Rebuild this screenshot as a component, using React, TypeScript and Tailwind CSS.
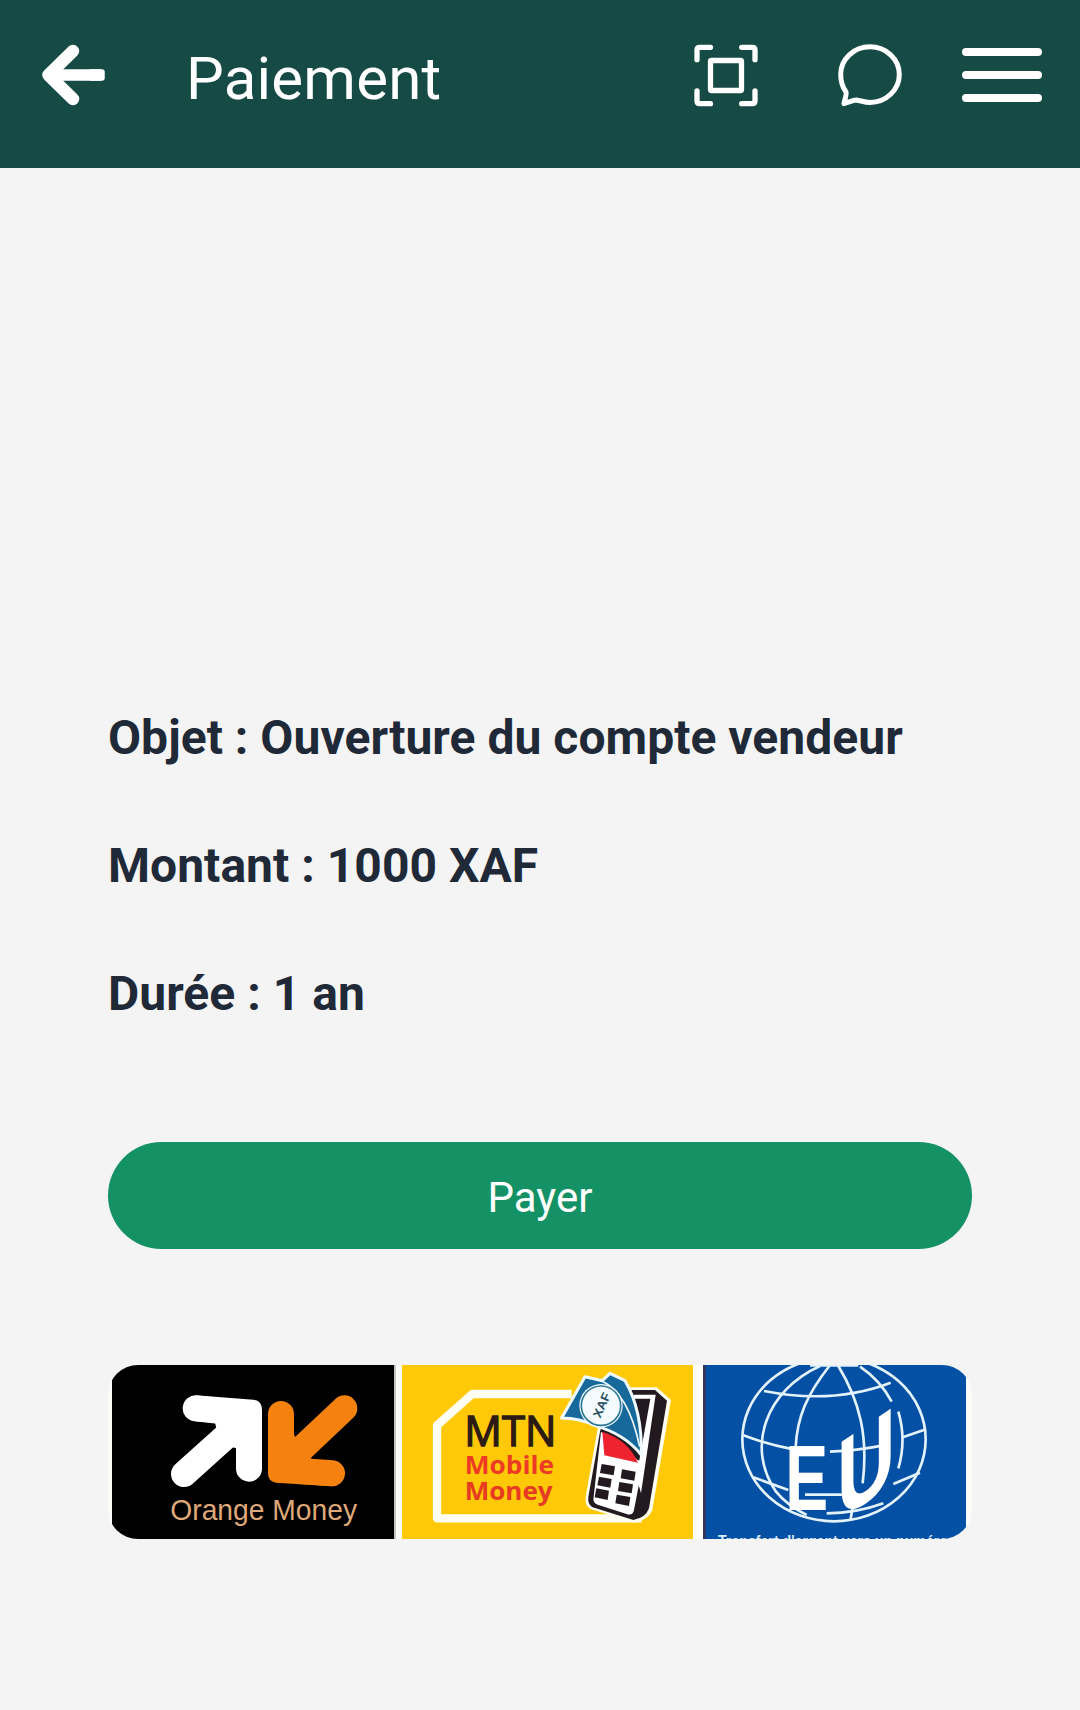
import React from "react";

function BackArrow() {
  return (
    <svg className="h-[64px] w-[66px]" viewBox="40 43.500 66 64" fill="none" stroke="white" strokeLinejoin="round">
      <path d="M73 51.500 48.500 75.500 73 99.500" strokeWidth="12.500" strokeLinecap="round" />
      <path d="M50 75.500H101" strokeWidth="11.500" />
      <rect x="90" y="71.500" width="13" height="8" rx="1" fill="white" strokeWidth="3.500" />
    </svg>
  );
}

function ScanIcon() {
  return (
    <svg className="h-[64px] w-[66px]" viewBox="693 43 66 64" fill="none" stroke="white" strokeWidth="5.300" strokeLinecap="round" strokeLinejoin="round">
      <path d="M697 59.700V50q0-2.700 2.700-2.700H710.500M741.700 47.300H752.300q2.700 0 2.700 2.700V59.700M755 91V101q0 2.700-2.700 2.700H741.700M710.500 103.700H699.700q-2.700 0-2.700-2.700V91" />
      <rect x="710.500" y="60.500" width="31" height="30" rx="1" />
    </svg>
  );
}

function ChatIcon() {
  return (
    <svg className="h-[64px] w-[66px]" viewBox="837 43 66 64" fill="none" stroke="white" strokeWidth="5" strokeLinecap="round" strokeLinejoin="round">
      <path d="M846 92C842.500 87 840.700 81 840.700 74.500 840.700 59 854 46.800 870 46.800S899.300 59 899.300 74.500 886 102.500 870 102.500C865 102.500 861 100.800 856.500 100 852.500 100.300 848.500 102.500 844 103.600 844.600 99.500 846.800 95 846 92Z" />
    </svg>
  );
}

function OrangeMoney() {
  return (
    <svg className="h-[174px] w-[282px] shrink-0 bg-black" viewBox="36 45 846 522">
      <path d="M287 175 390 186M447 235 447 356M430 212 252 372" fill="none" stroke="#fff" strokeWidth="78" strokeLinecap="round" />
      <path d="M287 136 460 149Q486 152 486 180V355H408V295L360 280 345 218 287 214Z" fill="#fff" />
      <path d="M543 192V345M600 363 696 370M553 345 733 175" fill="none" stroke="#f5820f" strokeWidth="78" strokeLinecap="round" />
      <path d="M504 190H582V253L600 300 640 331 696 332 696 409 528 398Q504 395 504 370Z" fill="#f5820f" />
      <text x="211" y="509" textLength="560" lengthAdjust="spacingAndGlyphs" fontFamily="Liberation Sans" fontSize="88" fill="#dfa878">Orange Money</text>
    </svg>
  );
}

function MtnMoney() {
  return (
    <svg className="h-[174px] w-[291px] shrink-0 bg-[#ffc907]" viewBox="21 45 873 522">
      <path d="M530 132H232L126 226V505H740" fill="none" stroke="#fffef2" strokeWidth="25" strokeLinejoin="round" />
      <text x="208" y="288" textLength="276" lengthAdjust="spacingAndGlyphs" fontFamily="Open Sans" fontSize="124" fill="#2c1a14" stroke="#2c1a14" strokeWidth="4">MTN</text>
      <text x="209" y="373" textLength="268" lengthAdjust="spacingAndGlyphs" fontFamily="Open Sans" fontWeight="700" fontSize="74" fill="#ee3a24">Mobile</text>
      <text x="209" y="451" textLength="264" lengthAdjust="spacingAndGlyphs" fontFamily="Open Sans" fontWeight="700" fontSize="74" fill="#e63a22">Money</text>
      <path d="M700 112H785L828 150 772 480Q760 512 715 518L590 478Q568 470 572 440L610 225Z" fill="#fffef2" />
      <path d="M705 120H780L816 152 762 475Q752 504 715 510L600 474Q576 468 580 440L616 240Z" fill="#231a20" />
      <path d="M618 245 728 330 745 335 717 480Q713 498 695 492L608 464Q592 458 596 440Z" fill="#fff" />
      <path d="M716 134H782L738 430 724 380 766 146H716Z" fill="#fff" />
      <path d="M622 245 Q700 270 729 338L628 316Z" fill="#ed2330" />
      <path fill="#231a20" d="M620 342 660 349 656 376 615 369ZM681 358 722 365 718 392 677 385ZM612 380 650 387 646 413 607 406ZM673 396 714 403 710 430 669 423ZM604 415 642 422 638 450 599 442ZM665 434 706 441 702 468 661 460Z" />
      <path d="M500 204 570 80 622 92 645 70 690 92Q742 180 739 315Q690 252 598 226 556 205 500 204Z" fill="#17699c" stroke="#effbff" strokeWidth="9" strokeLinejoin="round" />
      <path d="M622 94Q700 130 734 290" fill="none" stroke="#effbff" strokeWidth="5" />
      <circle cx="618" cy="167" r="65" fill="#f4fbff" />
      <circle cx="618" cy="167" r="59" fill="none" stroke="#2c7796" strokeWidth="5" />
      <text transform="translate(616 206) rotate(-66)" textLength="78" lengthAdjust="spacingAndGlyphs" fontFamily="Liberation Sans" fontWeight="700" fontSize="37" fill="#28505f">XAF</text>
    </svg>
  );
}

function ExpressUnion() {
  return (
    <svg className="h-[174px] w-[263px] shrink-0 bg-[#0350a4]" viewBox="39 45 789 522">
      <rect x="39" y="45" width="8" height="522" fill="#343553" />
      <g fill="none" stroke="#e4f2fb" strokeWidth="8">
        <ellipse cx="432" cy="268" rx="275" ry="246" />
        <path d="M390 48C230 120 165 290 258 425Q290 465 350 495M418 48C350 135 322 200 317 290M445 48C510 155 535 260 518 400M510 50Q570 90 605 155M625 185Q650 270 625 355" />
        <path d="M222 123Q430 164 602 98M160 256Q235 284 300 296M420 305Q500 302 580 286M638 262 708 238M190 382 295 420M345 434H478M610 402 690 368M410 490Q500 490 580 460M490 460 482 508" />
      </g>
      <path d="M360 47H505" stroke="#e4f2fb" strokeWidth="6" />
      <g fontFamily="Liberation Sans" fontWeight="700" fill="#fff">
        <text transform="translate(286 480) scale(0.7 1)" fontSize="276">E</text>
        <text transform="translate(440 516) skewY(-34) scale(0.73 1)" fontSize="335">U</text>
      </g>
      <text x="84" y="592" textLength="690" lengthAdjust="spacingAndGlyphs" fontFamily="Liberation Sans" fontWeight="700" fontSize="50" fill="#d9ebf8">Transfert d'argent vers un numéro</text>
    </svg>
  );
}

export default function App() {
  return (
    <div className="flex h-[1710px] w-[1080px] flex-col overflow-hidden bg-[#f4f4f4] font-['Roboto',sans-serif]">
      <header className="flex h-[168px] shrink-0 items-start bg-[#164a44] text-white">
        <button aria-label="Retour" className="mt-[43px] ml-[40px]"><BackArrow /></button>
        <h1 className="mt-[45px] ml-[80px] w-[507px] text-[60px] leading-[68px] tracking-[0.2px]">Paiement</h1>
        <button aria-label="Scanner" className="mt-[43px]"><ScanIcon /></button>
        <button aria-label="Messages" className="mt-[43px] ml-[78px]"><ChatIcon /></button>
        <button aria-label="Menu" className="mt-[48px] ml-[59px] flex w-[80px] flex-col gap-[15px]">
          <span className="h-[8px] w-full rounded-full bg-white" />
          <span className="h-[8px] w-full rounded-full bg-white" />
          <span className="h-[8px] w-full rounded-full bg-white" />
        </button>
      </header>
      <main className="flex flex-col px-[108px] pt-[543px]">
        <div className="flex flex-col gap-[74px] text-[48px] leading-[54px] font-bold tracking-[0.03px] whitespace-nowrap text-[#1f2937]">
          <p>Objet : Ouverture du compte vendeur</p>
          <p>Montant : 1000 XAF</p>
          <p>Durée : 1 an</p>
        </div>
        <button className="mt-[121px] h-[107px] w-full rounded-full bg-[#149266] pt-[3px] text-[42px] text-white">Payer</button>
        <div className="mt-[116px] flex h-[174px] w-full overflow-hidden rounded-[30px] bg-[#fcfcf8] pl-[4px]">
          <OrangeMoney />
          <div className="w-[8px] shrink-0 border-l-2 border-[#c9c4bd]" />
          <MtnMoney />
          <div className="w-[10px] shrink-0" />
          <ExpressUnion />
        </div>
      </main>
    </div>
  );
}
